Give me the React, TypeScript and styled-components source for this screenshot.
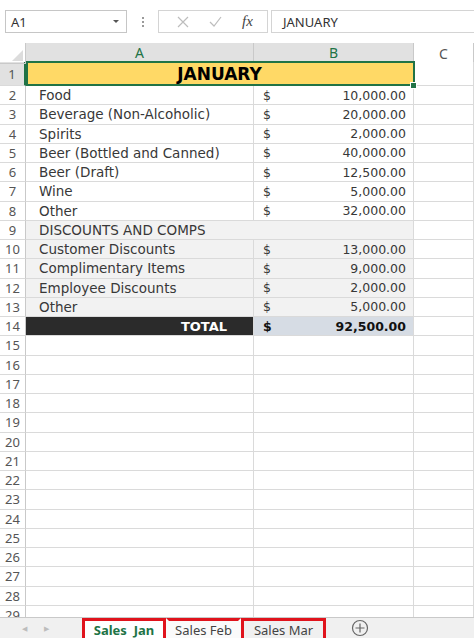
import styled, { createGlobalStyle } from "styled-components"

const GRID_LINE = "#dadada"
const HEADER_LINE = "#c9c9c9"
const EXCEL_GREEN = "#217346"
const MARK_RED = "#e0131c"
const CELL_FONT = `"DejaVu Sans", "Liberation Sans", sans-serif`
const UI_FONT = `"Noto Sans", "Open Sans", sans-serif`
const COLS = "26px 228px 160px 1fr"

const GlobalStyle = createGlobalStyle`
  html, body {
    margin: 0;
    padding: 0;
    background: #fff;
  }
  body {
    font-family: ${UI_FONT};
  }
`

const Window = styled.div`
  width: 474px;
  height: 638px;
  display: flex;
  flex-direction: column;
  overflow: hidden;
  background: #fff;
`

/* formula bar */
const FormulaBar = styled.div`
  height: 43px;
  flex: none;
  display: flex;
  align-items: flex-start;
  padding: 10px 0 0 5px;
  box-sizing: border-box;
`

const NameBox = styled.div`
  width: 122px;
  height: 23px;
  border: 1px solid #c6c6c6;
  box-sizing: border-box;
  display: flex;
  align-items: center;
  justify-content: space-between;
  padding: 0 7px 0 5px;
  font-size: 13px;
  color: #333;
`

const DropArrow = styled.span`
  width: 0;
  height: 0;
  border-left: 3px solid transparent;
  border-right: 3px solid transparent;
  border-top: 3px solid #555;
`

const Grip = styled.div`
  width: 31px;
  height: 23px;
  display: flex;
  flex-direction: column;
  align-items: center;
  justify-content: center;
  gap: 2px;

  span {
    width: 2px;
    height: 2px;
    background: #9a9a9a;
  }
`

const ActionBox = styled.div`
  width: 110px;
  height: 23px;
  border: 1px solid #d4d4d4;
  box-sizing: border-box;
  display: flex;
  align-items: center;
  justify-content: space-around;
  padding: 0 4px 0 8px;
  color: #b8b8b8;
`

const Fx = styled.span`
  font-family: "Liberation Serif", serif;
  font-style: italic;
  font-size: 15px;
  color: #444;
`

const FormulaInput = styled.div`
  flex: 1;
  height: 23px;
  margin-left: 3px;
  border: 1px solid #d4d4d4;
  border-right: none;
  box-sizing: border-box;
  display: flex;
  align-items: center;
  padding-left: 11px;
  font-size: 13px;
  color: #333;
`

/* sheet */
const Sheet = styled.div`
  flex: 1;
  overflow: hidden;
`

const Row = styled.div<{ $h: number }>`
  display: grid;
  grid-template-columns: ${COLS};
  height: ${(p) => p.$h}px;
`

const Corner = styled.div`
  position: relative;
  border-right: 1px solid ${HEADER_LINE};
  border-bottom: 1px solid ${HEADER_LINE};

  &::after {
    content: "";
    position: absolute;
    right: 2px;
    bottom: 2px;
    width: 0;
    height: 0;
    border-left: 11px solid transparent;
    border-bottom: 11px solid #dcdcdc;
  }
`

const ColHead = styled.div<{ $selected?: boolean }>`
  display: flex;
  align-items: center;
  justify-content: center;
  font-size: 14px;
  color: ${(p) => (p.$selected ? EXCEL_GREEN : "#555")};
  background: ${(p) => (p.$selected ? "#e1e1e1" : "#fff")};
  border-right: 1px solid ${HEADER_LINE};
  border-bottom: ${(p) => (p.$selected ? `2px solid ${EXCEL_GREEN}` : `1px solid ${HEADER_LINE}`)};
  box-sizing: border-box;
`

const RowHead = styled.div<{ $selected?: boolean }>`
  display: flex;
  align-items: center;
  justify-content: center;
  font-size: 13px;
  color: #555;
  background: ${(p) => (p.$selected ? "#e1e1e1" : "#fff")};
  border-right: ${(p) => (p.$selected ? `2px solid ${EXCEL_GREEN}` : `1px solid ${HEADER_LINE}`)};
  border-bottom: 1px solid ${GRID_LINE};
  box-sizing: border-box;
`

const Cell = styled.div<{
  $bg?: string
  $span?: number
  $justify?: string
  $bold?: boolean
  $color?: string
  $size?: number
  $pad?: string
}>`
  grid-column: span ${(p) => p.$span ?? 1};
  display: flex;
  align-items: center;
  justify-content: ${(p) => p.$justify ?? "flex-start"};
  padding: ${(p) => p.$pad ?? "0 8px"};
  background: ${(p) => p.$bg ?? "#fff"};
  border-right: 1px solid ${GRID_LINE};
  border-bottom: 1px solid ${GRID_LINE};
  box-sizing: border-box;
  font-family: ${CELL_FONT};
  font-size: ${(p) => p.$size ?? 13.5}px;
  font-weight: ${(p) => (p.$bold ? 700 : 400)};
  color: ${(p) => p.$color ?? "#383838"};
  white-space: nowrap;
  overflow: visible;
`

const Selected = styled.div`
  position: relative;
  grid-column: span 2;

  &::before {
    content: "";
    position: absolute;
    inset: -1px -1px 0 0;
    border: 2px solid ${EXCEL_GREEN};
    pointer-events: none;
  }

  &::after {
    content: "";
    position: absolute;
    right: -3px;
    bottom: -3px;
    width: 5px;
    height: 5px;
    background: ${EXCEL_GREEN};
    border: 1px solid #fff;
  }
`

/* sheet tabs */
const TabBar = styled.div`
  height: 21px;
  flex: none;
  display: flex;
  align-items: stretch;
  background: #f0f0f0;
  border-top: 1px solid ${HEADER_LINE};
  box-sizing: border-box;
`

const Nav = styled.div`
  width: 82px;
  display: flex;
  align-items: center;
  gap: 17px;
  padding-left: 22px;
  box-sizing: border-box;
  color: #bdbdbd;
  font-size: 7px;
`

const Tab = styled.div<{ $active?: boolean; $marked?: boolean; $w: number }>`
  width: ${(p) => p.$w}px;
  display: flex;
  align-items: center;
  justify-content: center;
  box-sizing: border-box;
  font-size: 13px;
  white-space: pre;
  font-weight: ${(p) => (p.$active ? 700 : 400)};
  color: ${(p) => (p.$active ? EXCEL_GREEN : "#444")};
  background: ${(p) => (p.$active ? "#fff" : p.$marked ? "#f0f0f0" : "#fafafa")};
  border: 3px solid ${(p) => (p.$marked ? MARK_RED : "transparent")};
  border-bottom: none;
  border-top-color: ${MARK_RED};
  padding-top: 1px;
`

const AddSheet = styled.div`
  margin-left: 25px;
  display: flex;
  align-items: center;
`

type Entry = { label: string; value: string }

const income: Entry[] = [
  { label: "Food", value: "10,000.00" },
  { label: "Beverage (Non-Alcoholic)", value: "20,000.00" },
  { label: "Spirits", value: "2,000.00" },
  { label: "Beer (Bottled and Canned)", value: "40,000.00" },
  { label: "Beer (Draft)", value: "12,500.00" },
  { label: "Wine", value: "5,000.00" },
  { label: "Other", value: "32,000.00" },
]

const discounts: Entry[] = [
  { label: "Customer Discounts", value: "13,000.00" },
  { label: "Complimentary Items", value: "9,000.00" },
  { label: "Employee Discounts", value: "2,000.00" },
  { label: "Other", value: "5,000.00" },
]

const ROW_H = 19.25
const GRAY = "#f2f2f2"

const AmountCell = ({ value, bg, bold }: { value: string; bg?: string; bold?: boolean }) => (
  <Cell
    $bg={bg}
    $justify="space-between"
    $bold={bold}
    $size={12.5}
    $pad="0 7px 0 9px"
    $color={bold ? "#111" : "#383838"}
  >
    <span>$</span>
    <span>{value}</span>
  </Cell>
)

const App = () => {
  const empty = Array.from({ length: 15 }, (_, i) => i + 15)
  let n = 1

  return (
    <Window>
      <GlobalStyle />
      <FormulaBar>
        <NameBox>
          A1
          <DropArrow />
        </NameBox>
        <Grip>
          <span />
          <span />
          <span />
        </Grip>
        <ActionBox>
          <svg width="12" height="12" viewBox="0 0 12 12">
            <path d="M1 1 L11 11 M11 1 L1 11" stroke="#bdbdbd" strokeWidth="1.2" fill="none" />
          </svg>
          <svg width="13" height="11" viewBox="0 0 13 11">
            <path d="M1 6 L5 10 L12 1" stroke="#bdbdbd" strokeWidth="1.2" fill="none" />
          </svg>
          <Fx>fx</Fx>
        </ActionBox>
        <FormulaInput>JANUARY</FormulaInput>
      </FormulaBar>

      <Sheet>
        <Row $h={19}>
          <Corner />
          <ColHead $selected>A</ColHead>
          <ColHead $selected>B</ColHead>
          <ColHead>C</ColHead>
        </Row>

        <Row $h={24}>
          <RowHead $selected>{n++}</RowHead>
          <Selected>
            <Cell $bg="#ffd966" $justify="center" $bold $size={17} $color="#000" style={{ height: "100%" }}>
              JANUARY
            </Cell>
          </Selected>
          <Cell />
        </Row>

        {income.map((item) => (
          <Row $h={ROW_H} key={"i" + item.label}>
            <RowHead>{n++}</RowHead>
            <Cell $pad="0 8px 0 13px">{item.label}</Cell>
            <AmountCell value={item.value} />
            <Cell />
          </Row>
        ))}

        <Row $h={ROW_H}>
          <RowHead>{n++}</RowHead>
          <Cell $span={2} $bg={GRAY} $pad="0 8px 0 13px">
            DISCOUNTS AND COMPS
          </Cell>
          <Cell />
        </Row>

        {discounts.map((item) => (
          <Row $h={ROW_H} key={"d" + item.label}>
            <RowHead>{n++}</RowHead>
            <Cell $bg={GRAY} $pad="0 8px 0 13px">
              {item.label}
            </Cell>
            <AmountCell value={item.value} bg={GRAY} />
            <Cell />
          </Row>
        ))}

        <Row $h={ROW_H}>
          <RowHead>{n++}</RowHead>
          <Cell $bg="#2b2b2b" $justify="flex-end" $bold $size={13} $color="#fff" $pad="0 26px 0 8px">
            TOTAL
          </Cell>
          <AmountCell value="92,500.00" bg="#d6dce4" bold />
          <Cell />
        </Row>

        {empty.map((r) => (
          <Row $h={ROW_H} key={r}>
            <RowHead>{r}</RowHead>
            <Cell />
            <Cell />
            <Cell />
          </Row>
        ))}
      </Sheet>

      <TabBar>
        <Nav>
          <span>◀</span>
          <span>▶</span>
        </Nav>
        <Tab $w={84} $active $marked>
          {"Sales  Jan"}
        </Tab>
        <Tab $w={75}>Sales Feb</Tab>
        <Tab $w={85} $marked>
          Sales Mar
        </Tab>
        <AddSheet>
          <svg width="18" height="18" viewBox="0 0 18 18">
            <circle cx="9" cy="9" r="7.5" stroke="#666" strokeWidth="1.2" fill="none" />
            <path d="M9 4.5 V13.5 M4.5 9 H13.5" stroke="#666" strokeWidth="1.2" />
          </svg>
        </AddSheet>
      </TabBar>
    </Window>
  )
}

export default App
